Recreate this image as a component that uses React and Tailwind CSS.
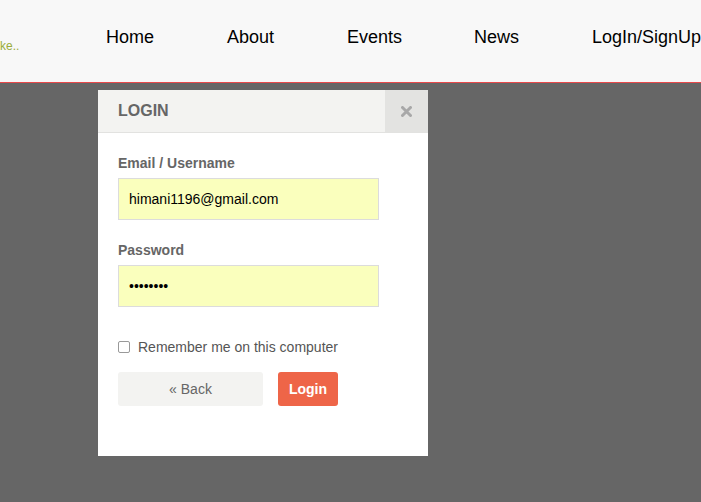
export default function App() {
  const nav = [
    ["Home", "w-[121px]"],
    ["About", "w-[120px]"],
    ["Events", "w-[127px]"],
    ["News", "w-[118px]"],
    ["LogIn/SignUp", "w-[120px]"],
  ];
  return (
    <div className="min-h-[502px] w-[701px] overflow-hidden bg-[#666666] font-['Liberation_Sans',Arial,sans-serif]">
      <header className="relative flex h-[83px] items-start border-b border-[#e8494b] bg-[#f8f8f8]">
        <div className="absolute left-0 top-[37px] text-[12px] text-[#9aad3a]">ke..</div>
        <nav className="ml-[106px] mt-[25px] flex whitespace-nowrap text-[18px] leading-[24px] text-black">
          {nav.map(([n, w]) => (
            <span key={n} className={`shrink-0 ${w}`}>{n}</span>
          ))}
        </nav>
      </header>
      <div className="ml-[98px] mt-[7px] h-[366px] w-[330px] bg-white">
        <div className="flex h-[43px] border-b border-[#e2e2e0] bg-[#f3f3f1]">
          <div className="flex flex-1 items-center pl-[20px] text-[16px] font-bold text-[#666]">LOGIN</div>
          <div className="flex w-[43px] items-center justify-center bg-[#e3e3e1]">
            <svg width="11" height="11" viewBox="0 0 11 11">
              <path d="M1.5 1.5 L9.5 9.5 M9.5 1.5 L1.5 9.5" stroke="#a8a8a8" strokeWidth="3" strokeLinecap="round" />
            </svg>
          </div>
        </div>
        <div className="pl-[20px]">
          <div className="mt-[20px] text-[14px] font-bold leading-[20px] text-[#666]">Email / Username</div>
          <div className="mt-[5px] flex h-[42px] w-[261px] items-center border border-[#dcdcdc] bg-[#faffbd] pl-[10px] text-[14px] text-black">himani1196@gmail.com</div>
          <div className="mt-[20px] text-[14px] font-bold leading-[20px] text-[#666]">Password</div>
          <div className="mt-[5px] flex h-[42px] w-[261px] items-center border border-[#dcdcdc] bg-[#faffbd] pl-[10px] text-[14px] text-black">••••••••</div>
          <div className="mt-[30px] flex h-[20px] items-center gap-[8px]">
            <span className="h-[12px] w-[12px] rounded-[2px] border border-[#999] bg-white"></span>
            <span className="text-[14px] text-[#555]">Remember me on this computer</span>
          </div>
          <div className="mt-[15px] flex gap-[15px]">
            <div className="flex h-[34px] w-[145px] items-center justify-center rounded-[3px] bg-[#f3f3f1] text-[14px] text-[#666]">« Back</div>
            <div className="flex h-[34px] w-[60px] items-center justify-center rounded-[3px] bg-[#ee6548] text-[14px] font-bold text-white">Login</div>
          </div>
        </div>
      </div>
    </div>
  );
}
